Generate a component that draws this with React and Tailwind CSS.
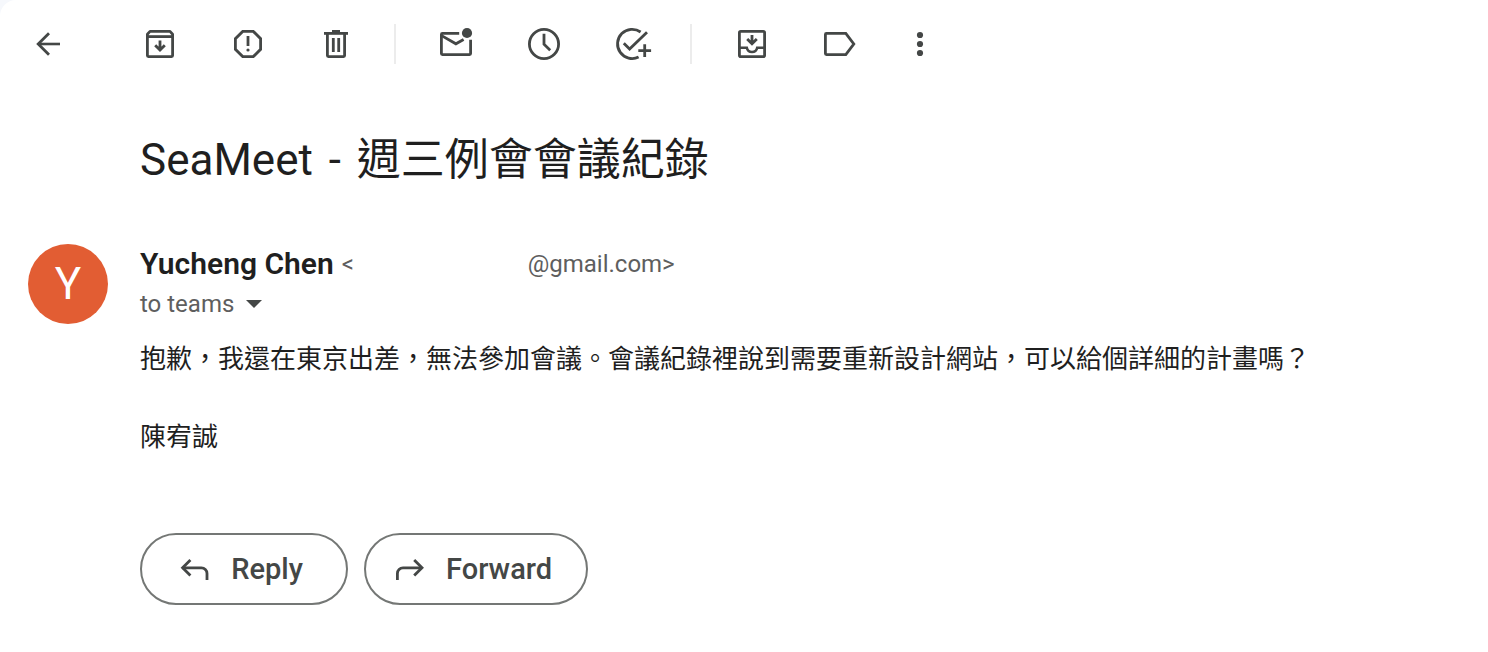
function Icon({ children }) {
  return (
    <svg
      viewBox="0 0 40 40"
      className="size-10 shrink-0"
      fill="none"
      stroke="currentColor"
      strokeWidth="2.8"
      aria-hidden="true"
    >
      {children}
    </svg>
  );
}

const icons = {
  back: (
    <>
      <path d="M32 20H10" strokeWidth="2.6" />
      <path d="M21 9.2 10.2 20 21 30.8" />
    </>
  ),
  archive: (
    <>
      <path d="M7.4 10.2 10 7.4H30L32.6 10.2V31.6a1 1 0 0 1-1 1H8.4a1 1 0 0 1-1-1Z" strokeLinejoin="round" />
      <path d="M7.4 12.6H32.6" />
      <path d="M20 16.5V26M15.2 21.3 20 26.1 24.8 21.3" />
    </>
  ),
  spam: (
    <>
      <path d="M14.7 7.4H25.3L32.6 14.7V25.3L25.3 32.6H14.7L7.4 25.3V14.7Z" />
      <path d="M20 12V22" />
      <circle cx="20" cy="26" r="1.6" fill="currentColor" stroke="none" />
    </>
  ),
  trash: (
    <>
      <path d="M8 9.4H32" />
      <path d="M16 7.2H24" strokeWidth="2.4" />
      <path d="M11.4 9.4V31.6a1 1 0 0 0 1 1H27.6a1 1 0 0 0 1-1V9.4" />
      <path d="M17.3 14V28M22.7 14V28" />
    </>
  ),
  unread: (
    <>
      <path d="M23.2 9.4H6.4a1 1 0 0 0-1 1V29.6a1 1 0 0 0 1 1H33.6a1 1 0 0 0 1-1V15.8" />
      <path d="M5.6 11.6 19.9 19.8 27.6 15.6" />
      <circle cx="31" cy="9" r="5.1" fill="currentColor" stroke="none" />
    </>
  ),
  snooze: (
    <>
      <circle cx="20" cy="20" r="14.6" />
      <path d="M20 9.8V20.2L26.2 26.2" />
    </>
  ),
  task: (
    <>
      <path d="M28.6 8A14.6 14.6 0 1 0 26.6 33" />
      <path d="M11.8 19.2 17.6 25 35 8.2" />
      <path d="M32.7 20.3V33.1M26.3 26.7H39.1" />
    </>
  ),
  move: (
    <>
      <rect x="7.4" y="7.4" width="25.2" height="25.2" rx="1.4" />
      <path d="M7.4 23.8H14.8C15.4 26.5 17.5 28 20 28S24.6 26.5 25.2 23.8H32.6" strokeWidth="2.6" />
      <path d="M20 11V20M15.2 15 20 19.8 24.8 15" />
    </>
  ),
  label: <path d="M6.4 9.4H25.8L33.8 20 25.8 30.6H6.4a1 1 0 0 1-1-1V10.4a1 1 0 0 1 1-1Z" />,
  more: (
    <g fill="currentColor" stroke="none">
      <circle cx="20" cy="11" r="3.1" />
      <circle cx="20" cy="20" r="3.1" />
      <circle cx="20" cy="29" r="3.1" />
    </g>
  ),
  reply: (
    <>
      <path d="M15.4 11 7.6 18.8 15.4 26.6" />
      <path d="M7.6 18.8H26.4a5.6 5.6 0 0 1 5.6 5.6V31" />
    </>
  ),
  forward: (
    <>
      <path d="M24.2 11 32 18.8 24.2 26.6" />
      <path d="M32 18.8H13a5.6 5.6 0 0 0-5.6 5.6V31" />
    </>
  ),
};

function ToolButton({ label, name }) {
  return (
    <button type="button" aria-label={label} className="block size-10 shrink-0">
      <Icon>{icons[name]}</Icon>
    </button>
  );
}

function Divider() {
  return <div className="mr-10 ml-[38px] h-10 w-0.5 shrink-0 bg-[#ececec]" />;
}

function ActionButton({ name, children }) {
  return (
    <button
      type="button"
      className="flex h-[72px] min-w-52 items-center justify-center gap-4 rounded-full border-2 border-[#747775] pr-[34px] pl-6 text-[29px] leading-9 font-medium text-[#444746]"
    >
      <Icon>{icons[name]}</Icon>
      <span>{children}</span>
    </button>
  );
}

export default function App() {
  return (
    <div className="min-h-screen bg-[#f6f8fc]">
      <main
        lang="zh-Hant"
        className="min-h-screen rounded-tl-2xl bg-white px-7 pb-12 font-[Roboto,'Noto_Sans_CJK_TC',sans-serif] text-[#1f1f1f]"
      >
        <div role="toolbar" aria-label="Message actions" className="flex items-center pt-6 text-[#444746]">
          <div className="w-28 shrink-0">
            <ToolButton label="Back" name="back" />
          </div>
          <div className="flex gap-12">
            <ToolButton label="Archive" name="archive" />
            <ToolButton label="Report spam" name="spam" />
            <ToolButton label="Delete" name="trash" />
          </div>
          <Divider />
          <div className="flex gap-12">
            <ToolButton label="Mark as unread" name="unread" />
            <ToolButton label="Snooze" name="snooze" />
            <ToolButton label="Add to tasks" name="task" />
          </div>
          <Divider />
          <div className="flex gap-12">
            <ToolButton label="Move to" name="move" />
            <ToolButton label="Labels" name="label" />
          </div>
          <div className="ml-10">
            <ToolButton label="More" name="more" />
          </div>
        </div>

        <h1 className="mt-16 ml-28 text-[44px] leading-16 font-normal">
          SeaMeet <span className="mx-[5px]">-</span> 週三例會會議紀錄
        </h1>

        <article className="mt-12 flex gap-8">
          <div className="mt-1 flex size-20 shrink-0 items-center justify-center rounded-full bg-[#e25d33] text-[44px] leading-none text-white">
            Y
          </div>
          <div className="min-w-0 flex-1">
            <header>
              <div className="flex h-12 items-center gap-2 leading-12">
                <span className="text-[30px] font-semibold">Yucheng Chen</span>
                <span className="flex text-2xl leading-12 text-[#5e5e5e]">
                  <span className="w-[186px]">&lt;</span>
                  <span>@gmail.com&gt;</span>
                </span>
              </div>
              <button type="button" className="flex items-center gap-3 text-2xl leading-8 text-[#5e5e5e]">
                to teams
                <svg viewBox="0 0 16 8" className="h-2 w-4 text-[#444746]" fill="currentColor" aria-hidden="true">
                  <path d="M0 0H16L8 8Z" />
                </svg>
              </button>
            </header>
            <div className="mt-5 text-[26px] leading-[39px]">
              <p>抱歉，我還在東京出差，無法參加會議。會議紀錄裡說到需要重新設計網站，可以給個詳細的計畫嗎？</p>
              <p className="mt-[39px]">陳宥誠</p>
            </div>
            <div className="mt-[76px] flex flex-wrap gap-4">
              <ActionButton name="reply">Reply</ActionButton>
              <ActionButton name="forward">Forward</ActionButton>
            </div>
          </div>
        </article>
      </main>
    </div>
  );
}
